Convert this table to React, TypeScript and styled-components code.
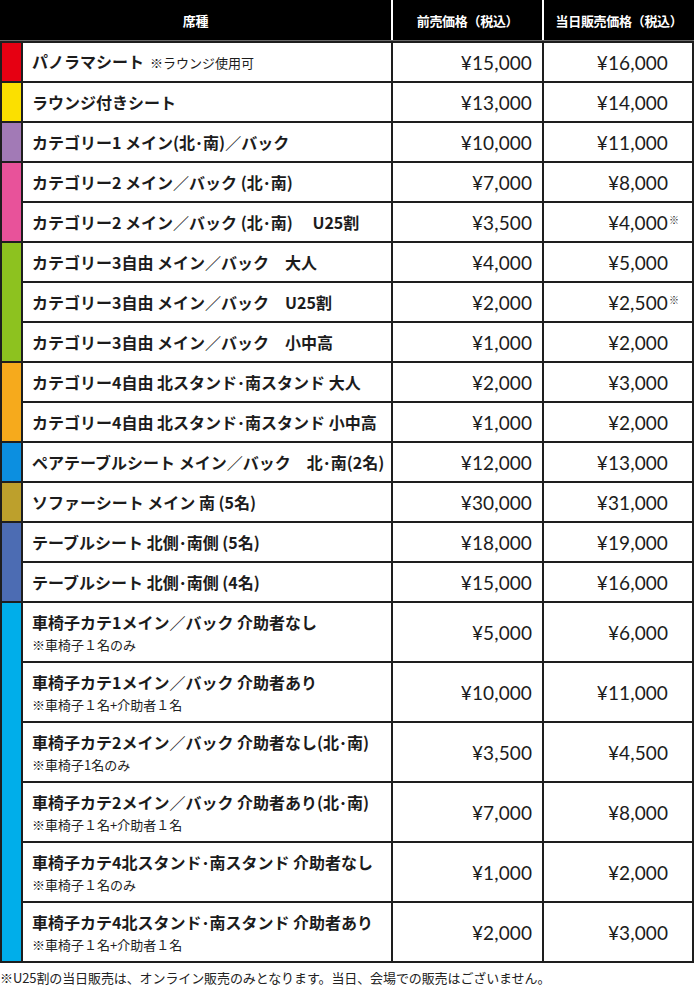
import React from "react";
import styled, { createGlobalStyle } from "styled-components";

const Global = createGlobalStyle`
  html, body { margin: 0; padding: 0; background: #fff; }
  body { font-family: "Noto Sans CJK JP", "Noto Sans", sans-serif; color: #222; }
`;

const Page = styled.div`
  width: 694px;
`;

const Table = styled.div`
  display: grid;
  grid-template-columns: 19px 368px 149px 148px;
  grid-template-rows: 41px repeat(14, 38px) repeat(6, 58px);
  gap: 2px;
  padding: 0 2px 2px 2px;
  background: #1e1e1e;
`;

const Header = styled.div`
  grid-column: 1 / -1;
  margin: 0 -2px;
  display: grid;
  grid-template-columns: 391px 151px 152px;
  background: #000;
  border-bottom: 1px solid #6a6a6a;
`;

const HeadCell = styled.div<{ $divider?: boolean }>`
  display: flex;
  align-items: center;
  justify-content: center;
  color: #fff;
  font-weight: 700;
  font-size: 13px;
  letter-spacing: -0.3px;
  border-left: ${(p) => (p.$divider ? "2px solid #fff" : "none")};
`;

const Strip = styled.div<{ $color: string; $span: number }>`
  grid-row: span ${(p) => p.$span};
  grid-column: 1;
  background: ${(p) => p.$color};
`;

const NameCell = styled.div`
  grid-column: 2;
  background: #fff;
  display: flex;
  flex-direction: column;
  justify-content: center;
  padding-left: 9px;
`;

const Name = styled.div`
  font-weight: 700;
  font-size: 16px;
  line-height: 24px;
  color: #1c1c1c;
  white-space: nowrap;
`;

const Aside = styled.span`
  font-weight: 400;
  font-size: 13px;
  margin-left: 6px;
`;

const Note = styled.div`
  font-weight: 400;
  font-size: 13px;
  line-height: 18px;
  color: #222;
  margin-top: 2px;
`;

const PriceCell = styled.div<{ $pr: number }>`
  background: #fff;
  display: flex;
  align-items: center;
  justify-content: flex-end;
  padding-right: ${(p) => p.$pr}px;
  font-family: Lato, "Noto Sans", sans-serif;
  font-size: 19px;
  font-weight: 400;
  color: #1c1c1c;
  letter-spacing: 0.1px;
`;

const Mark = styled.span`
  font-family: "Noto Sans CJK JP", sans-serif;
  font-size: 10px;
  align-self: flex-start;
  margin-top: 9px;
  margin-right: -11px;
  margin-left: 1px;
`;

const Footnote = styled.p`
  margin: 6px 0 0 0;
  font-size: 13px;
  line-height: 17px;
  color: #222;
  letter-spacing: -0.1px;
`;

type Row = {
  name: string;
  aside?: string;
  note?: string;
  pre: string;
  day: string;
  mark?: boolean;
};

type Group = { color: string; rows: Row[] };

const groups: Group[] = [
  { color: "#e60012", rows: [{ name: "パノラマシート", aside: "※ラウンジ使用可", pre: "¥15,000", day: "¥16,000" }] },
  { color: "#fbe000", rows: [{ name: "ラウンジ付きシート", pre: "¥13,000", day: "¥14,000" }] },
  { color: "#a27ab6", rows: [{ name: "カテゴリー1 メイン(北･南)／バック", pre: "¥10,000", day: "¥11,000" }] },
  {
    color: "#e8529a",
    rows: [
      { name: "カテゴリー2 メイン／バック (北･南)", pre: "¥7,000", day: "¥8,000" },
      { name: "カテゴリー2 メイン／バック (北･南)　 U25割", pre: "¥3,500", day: "¥4,000", mark: true },
    ],
  },
  {
    color: "#8dc21f",
    rows: [
      { name: "カテゴリー3自由 メイン／バック　大人", pre: "¥4,000", day: "¥5,000" },
      { name: "カテゴリー3自由 メイン／バック　U25割", pre: "¥2,000", day: "¥2,500", mark: true },
      { name: "カテゴリー3自由 メイン／バック　小中高", pre: "¥1,000", day: "¥2,000" },
    ],
  },
  {
    color: "#f6aa1c",
    rows: [
      { name: "カテゴリー4自由 北スタンド･南スタンド 大人", pre: "¥2,000", day: "¥3,000" },
      { name: "カテゴリー4自由 北スタンド･南スタンド 小中高", pre: "¥1,000", day: "¥2,000" },
    ],
  },
  { color: "#0c8fe0", rows: [{ name: "ペアテーブルシート メイン／バック　北･南(2名)", pre: "¥12,000", day: "¥13,000" }] },
  { color: "#bda02c", rows: [{ name: "ソファーシート メイン 南 (5名)", pre: "¥30,000", day: "¥31,000" }] },
  {
    color: "#4c6cb3",
    rows: [
      { name: "テーブルシート 北側･南側 (5名)", pre: "¥18,000", day: "¥19,000" },
      { name: "テーブルシート 北側･南側 (4名)", pre: "¥15,000", day: "¥16,000" },
    ],
  },
  {
    color: "#00aeea",
    rows: [
      { name: "車椅子カテ1メイン／バック 介助者なし", note: "※車椅子１名のみ", pre: "¥5,000", day: "¥6,000" },
      { name: "車椅子カテ1メイン／バック 介助者あり", note: "※車椅子１名+介助者１名", pre: "¥10,000", day: "¥11,000" },
      { name: "車椅子カテ2メイン／バック 介助者なし(北･南)", note: "※車椅子1名のみ", pre: "¥3,500", day: "¥4,500" },
      { name: "車椅子カテ2メイン／バック 介助者あり(北･南)", note: "※車椅子１名+介助者１名", pre: "¥7,000", day: "¥8,000" },
      { name: "車椅子カテ4北スタンド･南スタンド 介助者なし", note: "※車椅子１名のみ", pre: "¥1,000", day: "¥2,000" },
      { name: "車椅子カテ4北スタンド･南スタンド 介助者あり", note: "※車椅子１名+介助者１名", pre: "¥2,000", day: "¥3,000" },
    ],
  },
];

export default function App() {
  return (
    <Page>
      <Global />
      <Table>
        <Header>
          <HeadCell>席種</HeadCell>
          <HeadCell $divider>前売価格（税込）</HeadCell>
          <HeadCell $divider>当日販売価格（税込）</HeadCell>
        </Header>
        {groups.map((g, gi) => (
          <React.Fragment key={gi}>
            {g.rows.map((r, ri) => (
              <React.Fragment key={ri}>
                {ri === 0 && <Strip $color={g.color} $span={g.rows.length} />}
                <NameCell>
                  <Name>
                    {r.name}
                    {r.aside && <Aside>{r.aside}</Aside>}
                  </Name>
                  {r.note && <Note>{r.note}</Note>}
                </NameCell>
                <PriceCell $pr={10}>{r.pre}</PriceCell>
                <PriceCell $pr={24}>
                  {r.day}
                  {r.mark && <Mark>※</Mark>}
                </PriceCell>
              </React.Fragment>
            ))}
          </React.Fragment>
        ))}
      </Table>
      <Footnote>※U25割の当日販売は、オンライン販売のみとなります。当日、会場での販売はございません。</Footnote>
    </Page>
  );
}
